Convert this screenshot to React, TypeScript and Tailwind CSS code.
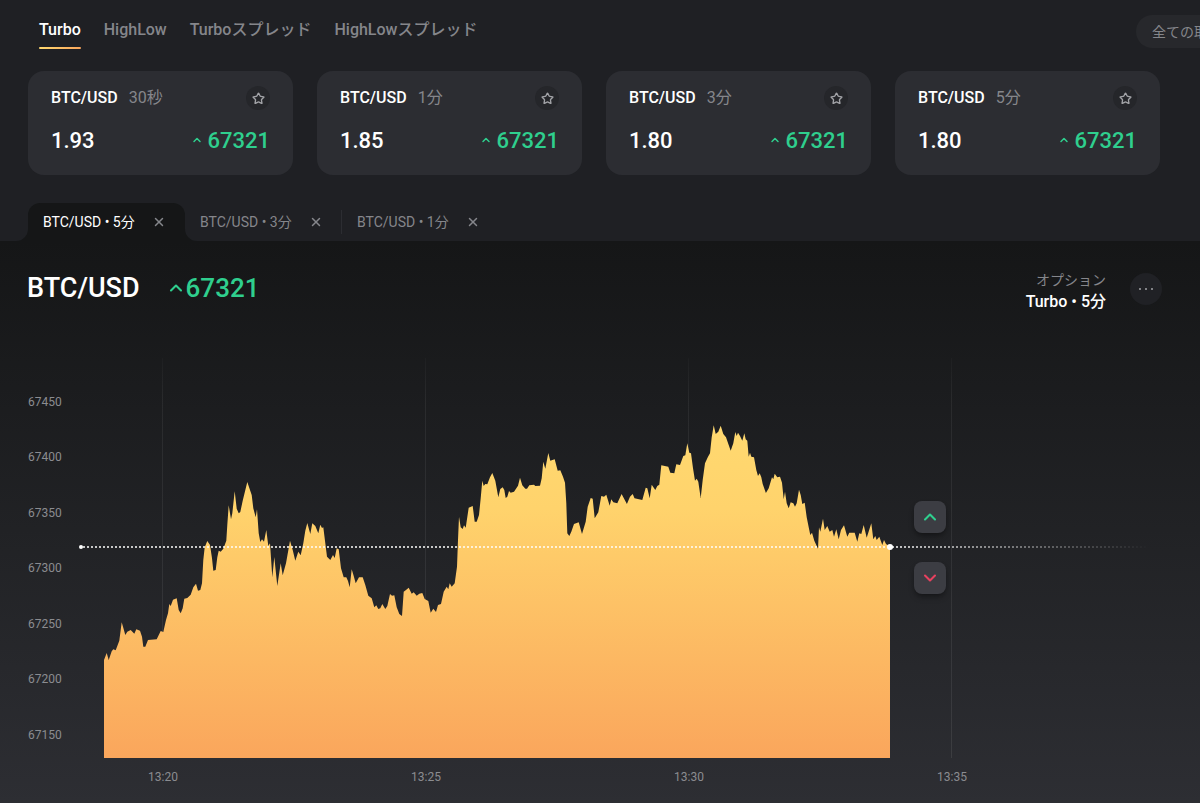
import React from 'react';
import clsx from 'clsx';
import { ChevronDown, ChevronUp, Star, X } from 'lucide-react';

interface Market {
  pair: string;
  duration: string;
  payout: string;
  rate: string;
}

const MODES = ['Turbo', 'HighLow', 'Turboスプレッド', 'HighLowスプレッド'];

const MARKETS: Market[] = [
  { pair: 'BTC/USD', duration: '30秒', payout: '1.93', rate: '67321' },
  { pair: 'BTC/USD', duration: '1分', payout: '1.85', rate: '67321' },
  { pair: 'BTC/USD', duration: '3分', payout: '1.80', rate: '67321' },
  { pair: 'BTC/USD', duration: '5分', payout: '1.80', rate: '67321' },
];

const TABS = ['BTC/USD • 5分', 'BTC/USD • 3分', 'BTC/USD • 1分'];

const PRICE_TICKS = [
  { label: '67450', y: 402 },
  { label: '67400', y: 457 },
  { label: '67350', y: 513 },
  { label: '67300', y: 568 },
  { label: '67250', y: 624 },
  { label: '67200', y: 679 },
  { label: '67150', y: 735 },
];

const TIME_TICKS = [
  { label: '13:20', x: 163 },
  { label: '13:25', x: 426 },
  { label: '13:30', x: 689 },
  { label: '13:35', x: 952 },
];

const PRICE_LINE = [
  '104,660 106.7,653 108.7,660 111.7,651.3 113.3,649.3 115.7,650.3 119.3,640.7 121.7,622.3 123.7,629.3 125.3,635',
  '127.3,631.7 130.7,630 134.3,633.7 136.3,629.3 140,630.7 142,636.7 143.3,646.7 145.3,646.7 148,640 156.7,639.3',
  '160.7,631 163.3,632 166,620 168,613.3 169.3,604 170.7,606 173,599.7 176.7,598.3 178.7,610 180.7,613.3',
  '182.7,608.3 184.3,598.7 187.3,598 190.7,594.7 193.3,587.3 196,583.7 198,590.7 200.3,590 202,583.3 203.3,560',
  '204.7,547.3 207.3,541 210,545 212,558.3 213.3,570.7 215.7,570 217.3,557.3 218.7,550.7 220.7,551.7 223.3,548.7',
  '226.3,540.7 227.3,525 228.7,505.3 231,519.3 232.3,513.3 234.7,491.3 236.7,508.7 238.7,513.3 240.3,512 242.7,500.7',
  '247.3,482 251.7,495 253.3,508.3 255.7,517.3 257,509.3 258.7,533.3 260.3,542 262,539.3 264,541.7 266.3,530',
  '268.3,546 270,543.3 272.3,577.3 274.3,557 277.3,586 280.7,563.3 282.7,575.3 286,563.3 290,540.7 292.7,550',
  '295.3,560.7 298.3,551.7 300.7,555.3 303.3,543.3 305.3,530.7 307.3,523 310.3,534 312.3,523.3 315.3,526 318.3,533.3',
  '320.3,524.7 322,528 323.3,527.3 325.3,543.3 327,556.7 330.3,560 333,555 334.7,558 336.7,548.3 338.7,549.3',
  '341,568.3 343.7,577.3 346.3,577.3 348,581 349.7,587.3 351.7,569.3 353.7,576 355.7,583.3 359,577.3 362.7,577.3',
  '365.3,585 368.3,595.7 371.7,598.3 374.3,607.3 376.3,605.3 378.3,609 380.3,608.3 382.3,604 385.3,609 387.3,606',
  '390,594 392,595.7 394.3,595.3 396.7,607.3 399.3,614 402,616 403.7,591.7 406,590 408.7,587.7 411.7,593.7',
  '413.7,592.3 416.7,595.7 419.3,593.7 422.3,593 424.7,599 428.3,601 430.7,612.7 433.3,608.7 436,612 438,605',
  '441,604 443.7,591.7 446.7,586.7 448.3,589.3 449.7,583.3 451.7,586.7 454.7,583.3 457,566.7 458,540 459,516.7',
  '460.7,527.3 462.7,529 464,525.3 465.7,527.7 468.7,507.7 472.7,506 474.7,521.7 476.7,521.7 479,515 480.7,498.3',
  '482.3,480.7 483.7,486 485.3,484 487.3,484.3 490,477.3 492.3,473 495.3,480.7 498.3,497.3 500.3,489 502.7,487.3',
  '504.3,490 505.7,498 507.3,496.7 509,491 510.7,492.7 514,491.7 518,485.7 520,477.7 522.3,485.3 525.3,488.7',
  '527,488.7 529.3,485.3 534,484.7 535.3,486 540,485.7 541.7,478.3 543.3,461.7 545.3,468.7 548.3,453 550.3,460.7',
  '554.7,459.3 557.7,470.7 560.3,470.3 563,476.7 565,482.7 566.3,503.3 567.3,533.3 569.3,536 571.3,531.7 574,524',
  '578.7,522.3 582,534 585.7,521.7 587.7,506.7 590.7,498 592.7,498.7 594.7,518.3 598.3,512.3 601.3,496 604,496.7',
  '606.3,494.7 609.7,505.7 611.3,499.3 613.3,502.3 617.3,503.3 621.6,494 626.9,504 630,496.7 632.7,494 634.5,498.3',
  '642.3,500 645.7,487.7 647.3,488.3 649.7,498.3 651.7,484.7 655.3,490 657.3,486 659.3,484.7 661.3,465.3 668.3,466.7',
  '670.3,472.7 674.3,473.3 676.3,464.3 680,465 683.3,456 685.3,455.3 687.3,443.3 689.3,452.7 691,453.3 693,468.3',
  '695,480.7 696.7,478.7 698.3,481.7 700.7,498 702.7,480 705,463.3 708,456.7 710,453.3 711.7,437.3 713.7,425.3',
  '715.7,434 718.3,431.7 720.7,425.7 723.3,434 726,437.3 728.7,445 730.7,450.7 733.3,443.3 735.3,432 736.7,436',
  '738,432.7 740,436 742.3,440.7 744.3,433.3 745.7,439.3 747.3,440.7 748.7,456.7 750,452.7 751.3,456.7 754,457.3',
  '756.3,470 758,476 759.7,473.3 761.3,477.3 762.7,484 765.9,493 768.7,488.3 772,477.3 773.3,479.3 774.7,473.7',
  '777.3,477.3 780,476.7 782,482.7 783.7,499.3 785,491.7 786.7,503.3 788.7,508.3 790.7,502.3 793.3,503.3 795,506.7',
  '796.7,503.3 799,489.7 800.7,495 802.3,504 804.7,502.7 806.7,517.3 808.7,527.3 810.3,535 812,532.7 814.3,540.7',
  '818,548.7 819,527.3 820.3,531.7 823,518.7 824.7,530 827.3,526 829.7,531.7 832.3,530 834,536.7 836.3,529.3',
  '838.7,539.3 841,530 844,525.3 847.3,536.7 849.3,532.7 854.7,532.7 857.3,541.7 859.3,533.3 861.3,534 863.7,525',
  '866.7,537.7 871.3,523.3 873.3,539.3 875.3,536 876.7,540 879.3,536.7 882.3,545 884,540 886,544 890,546.7',
].join(' ');

const MarketCard: React.FC<{ market: Market }> = ({ market }) => (
  <article className="flex h-[104px] flex-col rounded-2xl bg-[#2c2d32] px-[23px] pt-[15px]">
    <div className="flex h-6 items-center gap-[11px]">
      <span className="font-medium text-white">{market.pair}</span>
      <span className="text-[#85868b]">{market.duration}</span>
      <button
        type="button"
        aria-label="お気に入り"
        className="ml-auto flex size-6 items-center justify-center rounded-full bg-[#25262a] text-[#a2a3a7]"
      >
        <Star className="size-[13px]" strokeWidth={2.5} />
      </button>
    </div>
    <div className="mt-4 flex h-7 items-center justify-between text-[22px] font-medium">
      <span className="text-white">{market.payout}</span>
      <span className="flex items-center gap-1 text-[#2fcf8e]">
        <ChevronUp className="size-3" strokeWidth={3} />
        {market.rate}
      </span>
    </div>
  </article>
);

const PriceChart: React.FC = () => (
  <div className="relative mt-7">
    <svg viewBox="0 340 1200 463" className="block w-full" role="img" aria-label="BTC/USD">
      <defs>
        <linearGradient id="area" x1="0" y1="425" x2="0" y2="758" gradientUnits="userSpaceOnUse">
          <stop offset="0" stopColor="#ffd970" />
          <stop offset="0.25" stopColor="#ffd36c" />
          <stop offset="1" stopColor="#faa65c" />
        </linearGradient>
        <linearGradient id="grid" x1="0" y1="358" x2="0" y2="758" gradientUnits="userSpaceOnUse">
          <stop offset="0" stopColor="#fff" stopOpacity="0.02" />
          <stop offset="0.1" stopColor="#fff" stopOpacity="0.06" />
          <stop offset="1" stopColor="#fff" stopOpacity="0.08" />
        </linearGradient>
        <linearGradient id="fade" x1="890" y1="0" x2="1150" y2="0" gradientUnits="userSpaceOnUse">
          <stop offset="0" stopColor="#fff" stopOpacity="0.75" />
          <stop offset="1" stopColor="#fff" stopOpacity="0" />
        </linearGradient>
        <mask id="dots" maskUnits="userSpaceOnUse" x="892" y="545" width="258" height="4">
          <path d="M892 547H1150" stroke="#fff" strokeWidth="2" strokeDasharray="2 2" />
        </mask>
      </defs>

      {TIME_TICKS.map((tick) => (
        <rect key={tick.label} x={tick.x - 1} y="358" width="1" height="400" fill="url(#grid)" />
      ))}

      <polygon points={`104,758 ${PRICE_LINE} 890,758`} fill="url(#area)" />

      {/* Current rate */}
      <path d="M83 547H888" stroke="#fff" strokeWidth="2" strokeDasharray="2 2" opacity="0.75" />
      <rect x="892" y="546" width="258" height="2" fill="url(#fade)" mask="url(#dots)" />
      <circle cx="81" cy="547" r="2" fill="#fff" />
      <circle cx="890" cy="547" r="3" fill="#fff" />

      <g fill="#8b8c90" fontSize="12">
        {PRICE_TICKS.map((tick) => (
          <text key={tick.label} x="28" y={tick.y + 4}>
            {tick.label}
          </text>
        ))}
        {TIME_TICKS.map((tick) => (
          <text key={tick.label} x={tick.x} y="781" textAnchor="middle">
            {tick.label}
          </text>
        ))}
      </g>
    </svg>

    {/* Order buttons ride on the rate line */}
    <div className="absolute top-[34.7%] left-[76.2%] flex flex-col gap-[29px]">
      <button
        type="button"
        aria-label="High"
        className="flex size-8 items-center justify-center rounded-lg bg-[#3c3d43] text-[#2fcf8e] shadow-md shadow-black/30"
      >
        <ChevronUp className="size-5" strokeWidth={2.5} />
      </button>
      <button
        type="button"
        aria-label="Low"
        className="flex size-8 items-center justify-center rounded-lg bg-[#3c3d43] text-[#e8415f] shadow-md shadow-black/30"
      >
        <ChevronDown className="size-5" strokeWidth={2.5} />
      </button>
    </div>
  </div>
);

export default function App() {
  return (
    <div className="min-h-screen bg-[#1f2024] font-[Roboto,'Noto_Sans_CJK_JP',sans-serif] text-base text-white">
      <header className="flex h-[71px] items-start justify-between pl-[39px]">
        <nav className="flex items-start gap-[23px]">
          {MODES.map((mode, i) => (
            <button
              key={mode}
              type="button"
              className={clsx('pt-[18px] font-medium whitespace-nowrap', i === 0 ? 'text-white' : 'text-[#85868b]')}
            >
              {mode}
              {i === 0 && (
                <span className="mt-[5px] block h-0.5 rounded-full bg-gradient-to-r from-[#ffd970] to-[#faa65c]" />
              )}
            </button>
          ))}
        </nav>
        <button
          type="button"
          className="mt-[15px] h-[33px] w-16 overflow-hidden rounded-l-full bg-[#27282c] pl-4 text-left text-sm whitespace-nowrap text-[#85868b]"
        >
          全ての取引
        </button>
      </header>

      <section className="grid grid-cols-4 gap-6 pr-10 pl-7">
        {MARKETS.map((market) => (
          <MarketCard key={market.duration} market={market} />
        ))}
      </section>

      <div className="mt-7 flex h-[38px] pl-7 text-sm">
        {TABS.map((tab, i) => (
          <div
            key={tab}
            className={clsx(
              'relative flex w-[157px] items-center justify-between pr-[19px] pl-[15px]',
              i === 0 ? 'rounded-t-xl bg-[#151617] text-white' : 'text-[#85868b]'
            )}
          >
            {i === 0 && (
              <>
                <svg className="absolute bottom-0 -left-3 size-3" viewBox="0 0 12 12" fill="#151617">
                  <path d="M12 0V12H0A12 12 0 0 0 12 0Z" />
                </svg>
                <svg className="absolute -right-3 bottom-0 size-3" viewBox="0 0 12 12" fill="#151617">
                  <path d="M0 0V12H12A12 12 0 0 1 0 0Z" />
                </svg>
              </>
            )}
            {i === 2 && <span className="absolute -left-px h-6 w-px bg-[#2c2d32]" />}
            <button type="button">{tab}</button>
            <button type="button" aria-label="閉じる" className="text-[#85868b]">
              <X className="size-3.5" strokeWidth={2.5} />
            </button>
          </div>
        ))}
      </div>

      <main className="bg-gradient-to-b from-[#151617] to-[#2d2e33]">
        <div className="flex items-start pt-[27px] pr-[38px] pl-[27px]">
          <h1 className="text-[27px] leading-10 font-medium">BTC/USD</h1>
          <span className="ml-[26px] flex items-center text-[26px] leading-10 font-medium text-[#2fcf8e]">
            <ChevronUp className="size-5" strokeWidth={2.5} />
            67321
          </span>
          <div className="ml-auto pt-0.5 text-right">
            <p className="text-sm leading-[21px] text-[#85868b]">オプション</p>
            <p className="leading-[21px] font-medium">Turbo • 5分</p>
          </div>
          <button
            type="button"
            aria-label="メニュー"
            className="mt-[5px] ml-6 flex size-8 items-center justify-center gap-1 rounded-full bg-[#202125]"
          >
            <span className="size-0.5 rounded-full bg-[#a2a3a7]" />
            <span className="size-0.5 rounded-full bg-[#a2a3a7]" />
            <span className="size-0.5 rounded-full bg-[#a2a3a7]" />
          </button>
        </div>
        <PriceChart />
      </main>
    </div>
  );
}
